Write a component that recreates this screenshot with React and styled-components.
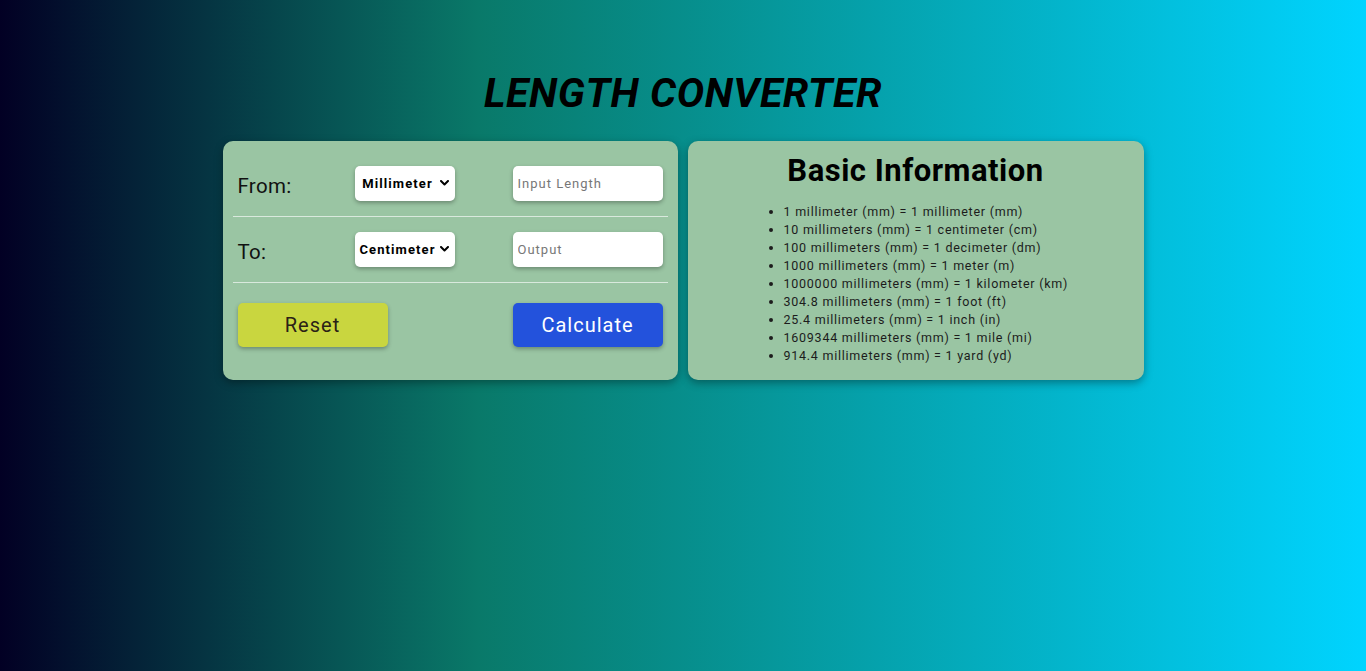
import React from "react";
import styled, { createGlobalStyle } from "styled-components";

const GlobalStyle = createGlobalStyle`
  html, body {
    margin: 0;
    padding: 0;
  }
  body {
    min-height: 671px;
    font-family: Roboto, "Liberation Sans", sans-serif;
    background: linear-gradient(90deg, rgb(2, 0, 36) 0%, rgb(9, 121, 105) 35%, rgb(0, 212, 255) 100%);
  }
`;

const Page = styled.div`
  min-height: 671px;
  display: flex;
  flex-direction: column;
  align-items: center;
  padding-top: 69px;
  box-sizing: border-box;
`;

const Title = styled.h1`
  margin: 0 0 24px;
  font-family: Roboto, "Liberation Sans", sans-serif;
  font-size: 41px;
  line-height: 48px;
  font-style: italic;
  font-weight: 700;
  letter-spacing: 0.6px;
  color: #000;
`;

const Cards = styled.div`
  display: flex;
  gap: 10px;
`;

const Card = styled.div`
  width: ${(p) => p.$w}px;
  height: 239px;
  box-sizing: border-box;
  background: #9ac5a3;
  border-radius: 10px;
  box-shadow: 0 3px 8px rgba(0, 0, 0, 0.35);
  padding: ${(p) => p.$pad};
`;

const Row = styled.div`
  display: grid;
  grid-template-columns: 117px 158px 150px;
  align-items: center;
  padding: 15px 5px;
  border-bottom: 1px solid #d9e9dd;
`;

const Label = styled.span`
  font-size: 20.5px;
  color: #111;
  letter-spacing: 0.3px;
  padding-top: 5px;
`;

const SelectWrap = styled.div`
  position: relative;
  width: 100px;
  height: 35px;
`;

const Select = styled.select`
  appearance: none;
  -webkit-appearance: none;
  width: 100px;
  height: 35px;
  border: none;
  border-radius: 5px;
  background: #fff;
  box-shadow: 0 2px 4px rgba(0, 0, 0, 0.3);
  font-family: Roboto, "Liberation Sans", sans-serif;
  font-size: 13px;
  font-weight: 700;
  letter-spacing: 1.1px;
  color: #000;
  padding: 0 14px 0 0;
  text-align: center;
  text-align-last: center;
  outline: none;
`;

const Chevron = styled.svg`
  position: absolute;
  right: 6px;
  top: 14px;
  width: 9px;
  height: 6px;
  pointer-events: none;
`;

const Input = styled.input`
  width: 150px;
  height: 35px;
  box-sizing: border-box;
  border: none;
  border-radius: 5px;
  background: #fff;
  box-shadow: 0 2px 4px rgba(0, 0, 0, 0.3);
  font-family: Roboto, "Liberation Sans", sans-serif;
  font-size: 13px;
  letter-spacing: 1px;
  padding: 0 5px;
  outline: none;
  &::placeholder {
    color: #777;
  }
`;

const ButtonRow = styled.div`
  display: flex;
  justify-content: space-between;
  padding: 20px 5px 0;
`;

const Button = styled.button`
  width: 150px;
  height: 44px;
  border: none;
  border-radius: 5px;
  background: ${(p) => p.$bg};
  color: ${(p) => p.$fg};
  box-shadow: 0 2px 4px rgba(0, 0, 0, 0.3);
  font-family: Roboto, "Liberation Sans", sans-serif;
  font-size: 20px;
  letter-spacing: 1px;
  cursor: pointer;
`;

const InfoTitle = styled.h2`
  margin: 0;
  text-align: center;
  font-size: 31px;
  line-height: 36px;
  font-weight: 700;
  letter-spacing: 0.5px;
  color: #000;
`;

const InfoList = styled.ul`
  margin: 14px 0 0;
  padding-left: 86px;
  font-size: 12.5px;
  line-height: 18px;
  letter-spacing: 0.75px;
  color: #1c1c1c;
`;

const facts = [
  "1 millimeter (mm) = 1 millimeter (mm)",
  "10 millimeters (mm) = 1 centimeter (cm)",
  "100 millimeters (mm) = 1 decimeter (dm)",
  "1000 millimeters (mm) = 1 meter (m)",
  "1000000 millimeters (mm) = 1 kilometer (km)",
  "304.8 millimeters (mm) = 1 foot (ft)",
  "25.4 millimeters (mm) = 1 inch (in)",
  "1609344 millimeters (mm) = 1 mile (mi)",
  "914.4 millimeters (mm) = 1 yard (yd)",
];

function UnitSelect({ value }) {
  return (
    <SelectWrap>
      <Select defaultValue={value}>
        <option value="mm">Millimeter</option>
        <option value="cm">Centimeter</option>
      </Select>
      <Chevron viewBox="0 0 9 6">
        <path d="M1 1 L4.5 4.5 L8 1" fill="none" stroke="#000" strokeWidth="2" strokeLinecap="round" strokeLinejoin="round" />
      </Chevron>
    </SelectWrap>
  );
}

export default function App() {
  return (
    <>
      <GlobalStyle />
      <Page>
        <Title>LENGTH CONVERTER</Title>
        <Cards>
          <Card $w={455} $pad="10px">
            <Row>
              <Label>From:</Label>
              <UnitSelect value="mm" />
              <Input placeholder="Input Length" />
            </Row>
            <Row>
              <Label>To:</Label>
              <UnitSelect value="cm" />
              <Input placeholder="Output" readOnly />
            </Row>
            <ButtonRow>
              <Button $bg="#c9d63f" $fg="#2b2116">Reset</Button>
              <Button $bg="#2352dc" $fg="#ffffff">Calculate</Button>
            </ButtonRow>
          </Card>
          <Card $w={456} $pad="12px 10px 10px">
            <InfoTitle>Basic Information</InfoTitle>
            <InfoList>
              {facts.map((f) => (
                <li key={f}>{f}</li>
              ))}
            </InfoList>
          </Card>
        </Cards>
      </Page>
    </>
  );
}
